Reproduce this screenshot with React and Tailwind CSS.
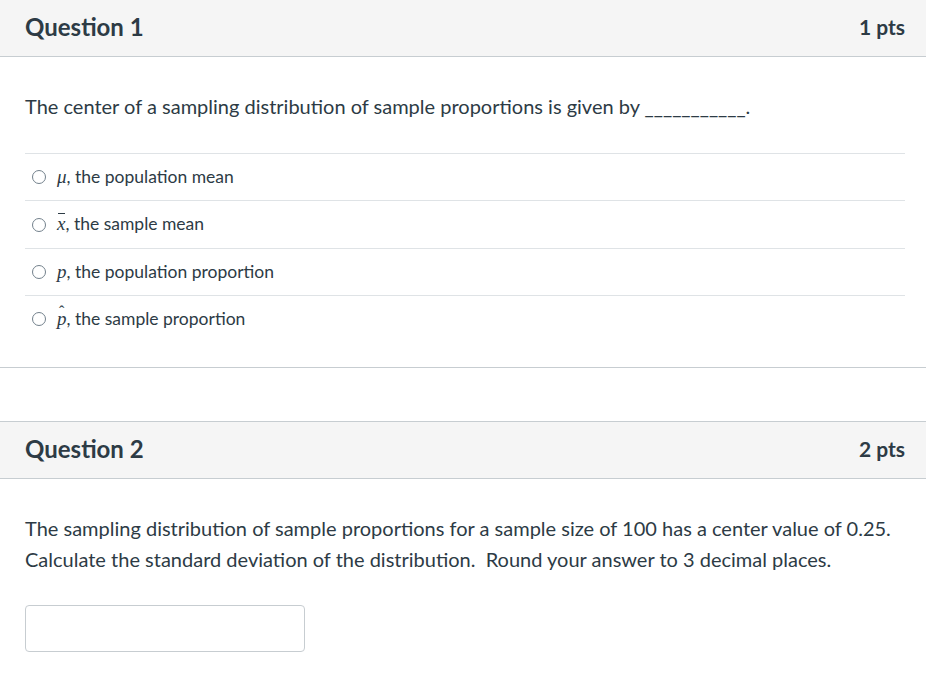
import React from 'react';

const serif = { fontFamily: '"Liberation Serif", "DejaVu Serif", serif' };

const answers = [
  { sym: <span>μ</span>, text: ', the population mean', h: 'h-[47px]' },
  { sym: <span className="relative inline-block">x<span className="absolute left-[1px] right-0 top-[3px] h-[1px] bg-[#2d3b45]" /></span>, text: ', the sample mean', h: 'h-[48px]' },
  { sym: <span>p</span>, text: ', the population proportion', h: 'h-[47px]' },
  { sym: <span className="relative inline-block">p<span className="absolute left-[2px] top-[-5px] text-[16px] not-italic">ˆ</span></span>, text: ', the sample proportion', h: 'h-[47px]' },
];

const QuestionHeader = ({ title, pts, top }) => (
  <div className={`flex items-center justify-between h-[58px] bg-[#f5f5f5] border-b border-[#c7cdd1] pl-[25px] pr-[21px] pb-[2px] ${top ? 'border-t' : ''}`}>
    <h2 className="text-[24px] font-bold text-[#2d3b45]">{title}</h2>
    <span className="text-[21px] font-bold text-[#2d3b45]">{pts}</span>
  </div>
);

const App = () => {
  return (
    <div className="w-[926px] h-[687px] overflow-hidden bg-white text-[#2d3b45]" style={{ fontFamily: 'Lato, "Noto Sans", sans-serif' }}>
      <div className="border-b border-[#c7cdd1] mt-[-1px]">
        <QuestionHeader title="Question 1" pts="1 pts" />
        <div className="pl-[25px] pr-[21px] pt-[34px] pb-[25px]">
          <p className="text-[20px] leading-[31px] mb-[31px]">
            The center of a sampling distribution of sample proportions is given by ___________.
          </p>
          <div>
            {answers.map((a, i) => (
              <div key={i} className={`flex items-center ${a.h} border-t border-[#dfe3e6] pl-[7px] text-[17.5px]`}>
                <span className="w-[14px] h-[14px] rounded-full border border-[#73818c] bg-white mr-[11px]" />
                <span className="italic text-[19px]" style={serif}>{a.sym}</span>
                <span>{a.text}</span>
              </div>
            ))}
          </div>
        </div>
      </div>

      <div className="h-[53px]" />

      <div>
        <QuestionHeader title="Question 2" pts="2 pts" top />
        <div className="pl-[25px] pr-[21px] pt-[34px]">
          <p className="text-[20px] leading-[31px]">
            The sampling distribution of sample proportions for a sample size of 100 has a center value of 0.25.
            <br />
            Calculate the standard deviation of the distribution.&nbsp; Round your answer to 3 decimal places.
          </p>
          <input type="text" className="mt-[30px] w-[280px] h-[47px] border border-[#c7cdd1] rounded-[4px] bg-white" />
        </div>
      </div>
    </div>
  );
};

export default App;
